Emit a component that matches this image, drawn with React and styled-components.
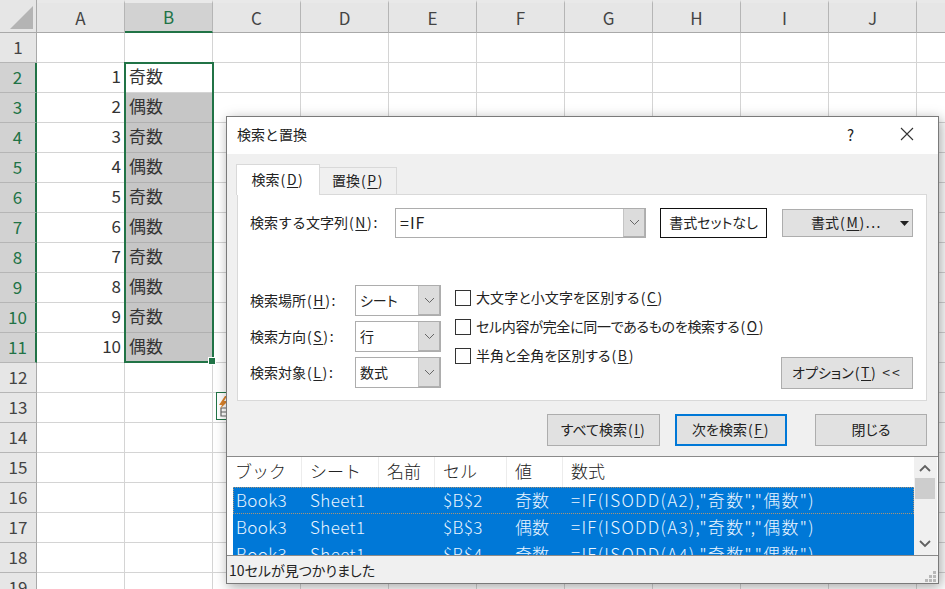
import styled, { createGlobalStyle } from 'styled-components';

const GlobalStyle = createGlobalStyle`
  html, body { margin: 0; padding: 0; background: #fff; }
  body { font-family: "Noto Sans CJK JP", "Noto Sans", sans-serif; color: #222; overflow: hidden; }
  * { box-sizing: border-box; }
`;

const green = '#217346';
const columns = ['A', 'B', 'C', 'D', 'E', 'F', 'G', 'H', 'I', 'J', ''];
const rows = Array.from({ length: 19 }, (_, i) => i + 1);
const kind = (n) => (n % 2 === 1 ? '奇数' : '偶数');
const results = [2, 3, 4].map((r) => ({ id: r, value: kind(r - 1), cell: `$B$${r}`, formula: `=IF(ISODD(A${r}),"奇数","偶数")` }));

const Sheet = styled.div`
  position: relative;
  width: 945px;
  height: 589px;
  overflow: hidden;
  display: grid;
  grid-template-columns: 37px repeat(11, 88px);
  grid-auto-rows: 30px;
  grid-template-rows: 33px;
`;
const Corner = styled.div`
  background: #e6e6e6;
  border-right: 1px solid #a9a9a9;
  border-bottom: 1px solid #a9a9a9;
  display: flex;
  justify-content: flex-end;
  align-items: flex-end;
  padding: 0 3px 3px 0;
  &::after {
    content: '';
    width: 23px;
    height: 23px;
    background: #b4b4b4;
    clip-path: polygon(100% 0, 100% 100%, 0 100%);
  }
`;
const ColHead = styled.div`
  display: flex;
  align-items: center;
  justify-content: center;
  padding-bottom: 1px;
  font-size: 17px;
  background: ${(p) => (p.$on ? '#d2d2d2' : '#e6e6e6')};
  color: ${(p) => (p.$on ? green : '#444')};
  border-top: 3px solid #e9e9e9;
  border-right: 1px solid #b5b5b5;
  border-bottom: ${(p) => (p.$on ? `2px solid ${green}` : '1px solid #a9a9a9')};
`;
const RowHead = styled.div`
  display: flex;
  align-items: center;
  justify-content: center;
  padding-bottom: 2px;
  font-size: 17px;
  background: ${(p) => (p.$on ? '#d2d2d2' : '#e6e6e6')};
  color: ${(p) => (p.$on ? green : '#444')};
  border-right: ${(p) => (p.$on ? `2px solid ${green}` : '1px solid #a9a9a9')};
  border-bottom: 1px solid #b5b5b5;
`;
const Cell = styled.div`
  display: flex;
  align-items: center;
  justify-content: ${(p) => (p.$num ? 'flex-end' : 'flex-start')};
  padding: 0 3px 4px 4px;
  font-size: 17px;
  color: #333;
  background: ${(p) => (p.$picked ? '#c6c6c6' : '#fff')};
  border-right: 1px solid #d4d4d4;
  border-bottom: 1px solid ${(p) => (p.$picked ? '#b0b0b0' : '#d4d4d4')};
`;
const Selection = styled.div`
  position: absolute;
  left: 124px;
  top: 62px;
  width: 90px;
  height: 301px;
  border: 2px solid ${green};
  &::after {
    content: '';
    position: absolute;
    right: -3px;
    bottom: -3px;
    width: 6px;
    height: 6px;
    background: ${green};
    box-shadow: 0 0 0 1px #fff;
  }
`;
const QuickBtn = styled.div`
  position: absolute;
  left: 216px;
  top: 392px;
  width: 28px;
  height: 28px;
  background: #fff;
  border: 1px solid ${green};
  svg { display: block; margin: 2px 0 0 0; }
`;

const Dialog = styled.div`
  position: absolute;
  left: 226px;
  top: 116px;
  width: 713px;
  height: 468px;
  display: flex;
  flex-direction: column;
  background: #f0f0f0;
  border: 1px solid #7a7a7a;
  box-shadow: 2px 3px 12px rgba(0, 0, 0, 0.35);
  font-size: 14px;
  color: #222;
  white-space: nowrap;
  font-feature-settings: "palt";
`;
const TitleBar = styled.div`
  height: 37px;
  flex: none;
  background: #fff;
  display: flex;
  align-items: center;
  padding: 0 24px 3px 10px;
  font-feature-settings: normal;
`;
const Title = styled.div`
  flex: 1;
`;
const Help = styled.div`
  width: 53px;
  font-size: 15px;
`;
const Tabs = styled.div`
  display: flex;
  align-items: flex-end;
  height: 41px;
  padding: 10px 0 0 9px;
  position: relative;
  z-index: 1;
  margin-bottom: -1px;
`;
const Tab = styled.div`
  display: flex;
  align-items: center;
  justify-content: center;
  width: ${(p) => (p.$active ? '84px' : '78px')};
  height: ${(p) => (p.$active ? '31px' : '28px')};
  padding-bottom: 2px;
  background: ${(p) => (p.$active ? '#fff' : '#f0f0f0')};
  border: 1px solid #d9d9d9;
  border-bottom: ${(p) => (p.$active ? 'none' : '1px solid #d9d9d9')};
  margin-left: ${(p) => (p.$active ? '0' : '-1px')};
  font-feature-settings: normal;
`;
const Panel = styled.div`
  margin: 0 11px 0 10px;
  height: 207px;
  flex: none;
  background: #fff;
  border: 1px solid #d9d9d9;
  padding: 13px 12px 0 12px;
`;
const FindRow = styled.div`
  display: flex;
  align-items: center;
  height: 30px;
`;
const Label = styled.div`
  flex: none;
  width: ${(p) => p.$w}px;
  padding-bottom: 2px;
  font-feature-settings: normal;
`;
const Combo = styled.div`
  flex: none;
  width: ${(p) => p.$w}px;
  height: ${(p) => p.$h}px;
  display: flex;
  background: #fff;
  border: 1px solid #adadad;
  font-size: 14px;
`;
const ComboText = styled.div`
  flex: 1;
  display: flex;
  align-items: center;
  padding: 0 0 2px 4px;
  font-size: ${(p) => p.$fs || 14}px;
  letter-spacing: ${(p) => p.$sp || 0}px;
`;
const ComboArrow = styled.div`
  flex: none;
  width: 22px;
  display: flex;
  align-items: center;
  justify-content: center;
  background: #dcdcdc;
  border-left: 1px solid #c4c4c4;
  border-right: 1px solid #b0b0b0;
  border-bottom: 1px solid #b0b0b0;
`;
const NoFormat = styled.div`
  flex: none;
  width: 107px;
  height: 30px;
  margin-left: 14px;
  padding-bottom: 2px;
  display: flex;
  align-items: center;
  justify-content: center;
  border: 1px solid #111;
  background: #fff;
`;
const Button = styled.div`
  flex: none;
  width: ${(p) => p.$w}px;
  height: ${(p) => p.$h || 32}px;
  padding-bottom: 2px;
  display: flex;
  align-items: center;
  justify-content: center;
  background: #e1e1e1;
  border: ${(p) => (p.$primary ? '2px solid #0078d7' : '1px solid #adadad')};
`;
const FormatButton = styled(Button)`
  margin-left: 15px;
  position: relative;
  padding-right: 2px;
  svg { position: absolute; right: 3px; top: 11px; }
`;
const Dots = styled.span`
  letter-spacing: 1.5px;
`;
const Options = styled.div`
  display: flex;
  margin-top: 47px;
  height: 104px;
`;
const Scopes = styled.div`
  display: flex;
  flex-direction: column;
  gap: 5px;
`;
const ScopeRow = styled.div`
  display: flex;
  align-items: center;
`;
const Checks = styled.div`
  margin-left: 14px;
  margin-top: -2px;
  display: flex;
  flex-direction: column;
`;
const CheckRow = styled.div`
  height: 29px;
  display: flex;
  align-items: center;
  gap: 5px;
`;
const CheckText = styled.span`
  padding-bottom: 2px;
  letter-spacing: ${(p) => p.$sp || 0}px;
`;
const Box = styled.span`
  flex: none;
  width: 16px;
  height: 16px;
  background: #fff;
  border: 1px solid #333;
`;
const OptionButton = styled(Button)`
  margin-left: auto;
  margin-right: 1px;
  align-self: flex-end;
`;
const Back = styled.span`
  margin-left: 5px;
  letter-spacing: 2px;
`;
const Actions = styled.div`
  display: flex;
  justify-content: flex-end;
  padding: 13px 11px 0 0;
  height: 55px;
  flex: none;
`;
const NextButton = styled(Button)`
  margin: 0 28px 0 15px;
`;
const Results = styled.div`
  flex: none;
  height: 100px;
  display: flex;
  background: #fff;
  border-top: 1px solid #8a8a8a;
  border-bottom: 1px solid #8a8a8a;
  overflow: hidden;
  font-feature-settings: normal;
`;
const ListArea = styled.div`
  flex: 1;
  overflow: hidden;
  font-size: 17px;
  font-weight: 300;
`;
const ListHead = styled.div`
  height: 30px;
  display: grid;
  grid-template-columns: 75px 77px 56px 72px 56px 1fr;
`;
const HeadCell = styled.div`
  display: flex;
  align-items: center;
  padding: 0 0 3px 8px;
  border-right: 1px solid #ececec;
  &:last-child { border-right: none; }
`;
const Row = styled.div`
  height: 27px;
  margin-left: 6px;
  display: grid;
  grid-template-columns: 69px 77px 56px 72px 56px 1fr;
  background: #0078d7;
  color: #eaf5ff;
  outline: ${(p) => (p.$focus ? '1px dotted #a89478' : 'none')};
  outline-offset: -1px;
`;
const RowCell = styled.div`
  display: flex;
  align-items: center;
  padding: 0 0 4px 8px;
  letter-spacing: 0.4px;
  &:first-child { padding-left: 3px; }
`;
const FormulaCell = styled(RowCell)`
  letter-spacing: 1.3px;
`;
const ValueCell = styled(RowCell)`
  letter-spacing: 0;
`;
const ScrollBar = styled.div`
  flex: none;
  width: 24px;
  background: #f0f0f0;
  border-right: 1px solid #fff;
  position: relative;
  svg { position: absolute; left: 5px; }
`;
const Thumb = styled.div`
  position: absolute;
  top: 21px;
  left: 1px;
  width: 20px;
  height: 21px;
  background: #cdcdcd;
`;
const Status = styled.div`
  flex: 1;
  display: flex;
  align-items: center;
  justify-content: space-between;
  padding: 0 2px;
  font-size: 14px;
  svg { align-self: flex-end; margin-bottom: 1px; }
`;
const Paren = styled.span`
  letter-spacing: 1.6px;
  margin-left: 1px;
`;
const Key = styled.span`
  text-decoration: underline;
  text-underline-offset: 2px;
`;

const Mn = ({ k }) => <Paren>(<Key>{k}</Key>)</Paren>;

const Chevron = () => (
  <svg width="11" height="7" viewBox="0 0 11 7"><path d="M1 1l4.5 4.5L10 1" fill="none" stroke="#666" strokeWidth="1" /></svg>
);

const SelectBox = ({ w, h, sp, fs, children }) => (
  <Combo $w={w} $h={h}>
    <ComboText $sp={sp} $fs={fs}>{children}</ComboText>
    <ComboArrow><Chevron /></ComboArrow>
  </Combo>
);

const App = () => {
  return (
    <>
      <GlobalStyle />
      <Sheet>
        <Corner />
        {columns.map((c, i) => <ColHead key={i} $on={c === 'B'}>{c}</ColHead>)}
        {rows.map((r) => {
          const on = r >= 2 && r <= 11;
          return [
            <RowHead key={`h${r}`} $on={on}>{r}</RowHead>,
            ...columns.map((c, i) => {
              if (c === 'A' && on) return <Cell key={i + 'c' + r} $num>{r - 1}</Cell>;
              if (c === 'B' && on) return <Cell key={i + 'c' + r} $picked={r > 2}>{kind(r - 1)}</Cell>;
              return <Cell key={i + 'c' + r} />;
            }),
          ];
        })}
        <Selection />
        <QuickBtn>
          <svg width="24" height="24" viewBox="0 0 24 24">
            <path d="M4 13h10v8H4z" fill="#fff" stroke="#666" strokeWidth="1.2" />
            <path d="M4 17h10" stroke="#666" strokeWidth="1" />
            <path d="M8 1L2 10h3l-2 4 8-8H7l3-5z" fill="#d9822b" />
          </svg>
        </QuickBtn>

        <Dialog>
          <TitleBar>
            <Title>検索と置換</Title>
            <Help>?</Help>
            <svg width="14" height="14" viewBox="0 0 14 14"><path d="M1 1l12 12M13 1L1 13" stroke="#333" strokeWidth="1.1" fill="none" /></svg>
          </TitleBar>
          <Tabs>
            <Tab $active>検索<Mn k="D" /></Tab>
            <Tab>置換<Mn k="P" /></Tab>
          </Tabs>
          <Panel>
            <FindRow>
              <Label $w={145}>検索する文字列<Mn k="N" />:</Label>
              <SelectBox w={251} h={30} sp={1} fs={16}>=IF</SelectBox>
              <NoFormat>書式セットなし</NoFormat>
              <FormatButton $w={131} $h={28}>
                書式<Mn k="M" /><Dots>...</Dots>
                <svg width="9" height="5" viewBox="0 0 9 5"><path d="M0 0h9L4.5 5z" fill="#222" /></svg>
              </FormatButton>
            </FindRow>
            <Options>
              <Scopes>
                <ScopeRow><Label $w={105}>検索場所<Mn k="H" />:</Label><SelectBox w={86} h={31}>シート</SelectBox></ScopeRow>
                <ScopeRow><Label $w={105}>検索方向<Mn k="S" />:</Label><SelectBox w={86} h={31}>行</SelectBox></ScopeRow>
                <ScopeRow><Label $w={105}>検索対象<Mn k="L" />:</Label><SelectBox w={86} h={31}>数式</SelectBox></ScopeRow>
              </Scopes>
              <Checks>
                <CheckRow><Box /><CheckText $sp={0.1}>大文字と小文字を区別する<Mn k="C" /></CheckText></CheckRow>
                <CheckRow><Box /><CheckText $sp={-0.3}>セル内容が完全に同一であるものを検索する<Mn k="O" /></CheckText></CheckRow>
                <CheckRow><Box /><CheckText>半角と全角を区別する<Mn k="B" /></CheckText></CheckRow>
              </Checks>
              <OptionButton $w={132}>オプション<Mn k="T" /><Back>&lt;&lt;</Back></OptionButton>
            </Options>
          </Panel>
          <Actions>
            <Button $w={113}>すべて検索<Mn k="I" /></Button>
            <NextButton $w={112} $primary>次を検索<Mn k="F" /></NextButton>
            <Button $w={112}>閉じる</Button>
          </Actions>
          <Results>
            <ListArea>
              <ListHead>
                <HeadCell>ブック</HeadCell>
                <HeadCell>シート</HeadCell>
                <HeadCell>名前</HeadCell>
                <HeadCell>セル</HeadCell>
                <HeadCell>値</HeadCell>
                <HeadCell>数式</HeadCell>
              </ListHead>
              {results.map((r, i) => (
                <Row key={r.id} $focus={i === 0}>
                  <RowCell>Book3</RowCell>
                  <RowCell>Sheet1</RowCell>
                  <RowCell />
                  <RowCell>{r.cell}</RowCell>
                  <ValueCell>{r.value}</ValueCell>
                  <FormulaCell>{r.formula}</FormulaCell>
                </Row>
              ))}
            </ListArea>
            <ScrollBar>
              <svg width="12" height="8" viewBox="0 0 12 8" style={{ top: 7 }}><path d="M1 7l5-5 5 5" fill="none" stroke="#606060" strokeWidth="1.8" /></svg>
              <Thumb />
              <svg width="12" height="8" viewBox="0 0 12 8" style={{ bottom: 7 }}><path d="M1 1l5 5 5-5" fill="none" stroke="#606060" strokeWidth="1.8" /></svg>
            </ScrollBar>
          </Results>
          <Status>
            10セルが見つかりました
            <svg width="11" height="11" viewBox="0 0 11 11" fill="#b8b8b8">
              <rect x="8" y="0" width="3" height="3" /><rect x="4" y="4" width="3" height="3" /><rect x="8" y="4" width="3" height="3" />
              <rect x="0" y="8" width="3" height="3" /><rect x="4" y="8" width="3" height="3" /><rect x="8" y="8" width="3" height="3" />
            </svg>
          </Status>
        </Dialog>
      </Sheet>
    </>
  );
};

export default App;
